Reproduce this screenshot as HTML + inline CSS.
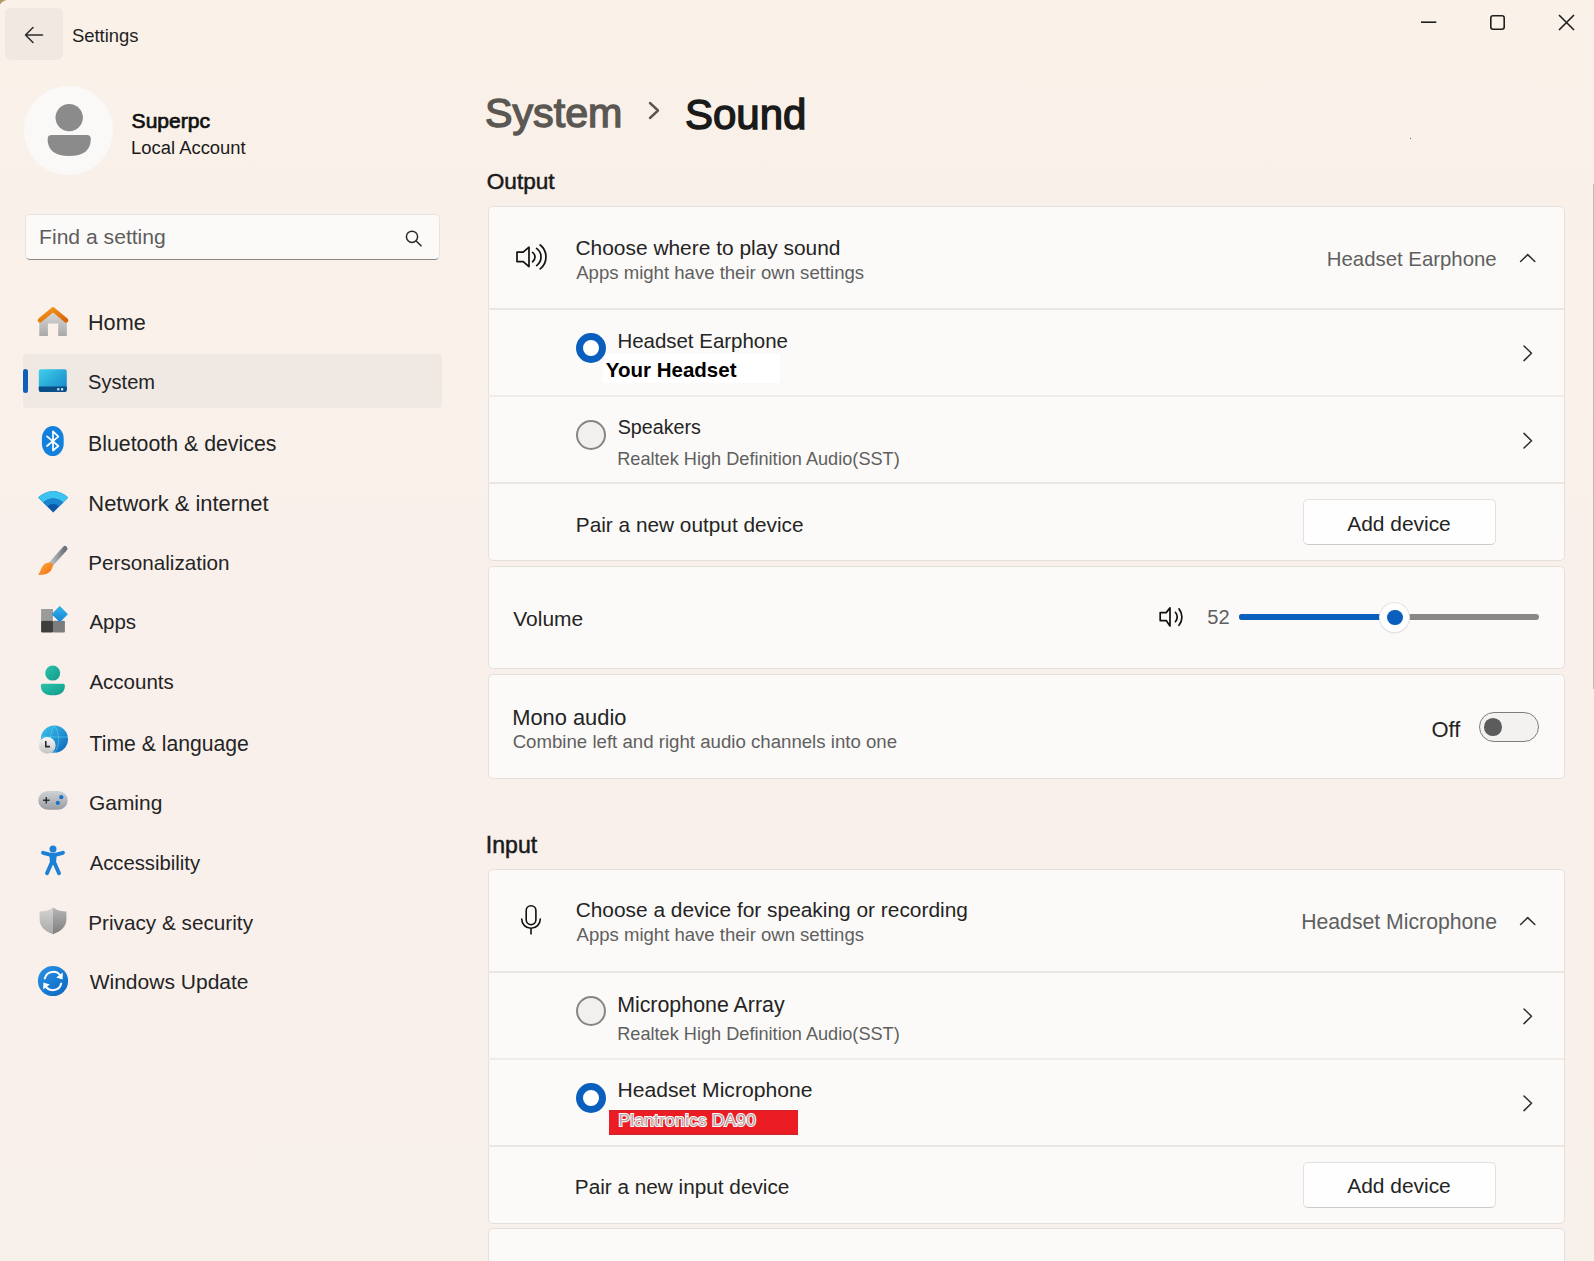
<!DOCTYPE html>
<html><head><meta charset="utf-8">
<style>
html,body{margin:0;padding:0;}
body{width:1594px;height:1261px;overflow:hidden;position:relative;font-family:"Liberation Sans",sans-serif;
background:linear-gradient(180deg,#faf2e9 0%,#f9f1e9 16%,#f9f0eb 45%,#f9f0ec 75%,#f8f0eb 100%);color:#242424;}
.t{position:absolute;white-space:nowrap;line-height:1;}
.b{font-weight:bold;}
.g{color:#5f5f5f;}
.card{position:absolute;left:487.5px;width:1077px;background:#fbfaf8;border:1px solid #e5e0dc;border-radius:4.5px;box-sizing:border-box;}
.div{position:absolute;left:488px;width:1076px;height:2px;background:#ebe6e2;}
.radio{position:absolute;width:30px;height:30px;border-radius:50%;box-sizing:border-box;z-index:2;}
.rsel{border:7px solid #0a5fbe;background:#fff;}
.runsel{border:2px solid #878583;background:#f2f0ee;}
.btn{position:absolute;left:1303px;width:193px;height:46px;background:#fefefe;border:1px solid #e3e0dd;border-bottom-color:#cdcac7;border-radius:5px;box-sizing:border-box;}
svg{position:absolute;overflow:visible;}
</style></head><body>

<!-- title bar -->
<svg style="left:0;top:0" width="10" height="10"><path d="M0,0 H7 Q2.5,0.8 0,4.5 Z" fill="#b3986c"/></svg>
<div style="position:absolute;left:5px;top:8px;width:58px;height:52px;border-radius:6px;background:#f0e8e1;"></div>
<svg style="left:0;top:0" width="1594" height="70">
  <path d="M25.5 35 H42.5 M25.5 35 L33 27.5 M25.5 35 L33 42.5" stroke="#2b2b2b" stroke-width="1.5" fill="none" stroke-linecap="round"/>
  <path d="M1421 22.2 H1436.3" stroke="#1f1f1f" stroke-width="1.6"/>
  <rect x="1490.8" y="15.8" width="13.4" height="13.4" rx="2.2" stroke="#1f1f1f" stroke-width="1.6" fill="none"/>
  <path d="M1559 15 L1574 30 M1574 15 L1559 30" stroke="#1f1f1f" stroke-width="1.6"/>
</svg>
<div id="t1" class="t" style="left:71.92px;top:26.88px;font-size:18.45px;color:#1f1f1f">Settings</div>

<!-- profile -->
<div style="position:absolute;left:24px;top:86px;width:89px;height:89px;border-radius:50%;background:#faf9f8;"></div>
<svg style="left:0;top:0" width="120" height="180">
  <circle cx="69.2" cy="117.6" r="13.7" fill="#8b8b8b"/>
  <path d="M47.6 139 Q47.6 135 51.6 135 H86.8 Q90.8 135 90.8 139 Q90.8 156 69.2 156 Q47.6 156 47.6 139 Z" fill="#8b8b8b"/>
</svg>
<div id="t2" class="t" style="left:131.62px;top:109.90px;font-size:21.05px;color:#111;-webkit-text-stroke:0.7px #111">Superpc</div>
<div id="t3" class="t" style="left:131.09px;top:138.50px;font-size:18.41px;color:#1a1a1a">Local Account</div>

<!-- search -->
<div style="position:absolute;left:24.5px;top:213.5px;width:415.5px;height:46px;border-radius:5px;background:#fbfaf8;border:1px solid #e8e4e0;border-bottom:1.6px solid #8a8682;box-sizing:border-box;"></div>
<div id="t4" class="t" style="left:39.06px;top:226.27px;font-size:21.11px;color:#5d5d5d">Find a setting</div>
<svg style="left:0;top:0" width="450" height="260">
  <circle cx="412" cy="236.8" r="5.6" stroke="#2b2b2b" stroke-width="1.5" fill="none"/>
  <path d="M416.2 241 L421 245.8" stroke="#2b2b2b" stroke-width="1.6" stroke-linecap="round"/>
</svg>

<!-- nav selected -->
<div style="position:absolute;left:23px;top:353.5px;width:419px;height:54.3px;border-radius:4px;background:#efe8e3;"></div>
<div style="position:absolute;left:22.6px;top:369px;width:5px;height:23.5px;border-radius:3px;background:#0f5fb8;"></div>

<div id="nav"></div>
<div id="t5" class="t" style="left:88.02px;top:312.04px;font-size:21.62px">Home</div>
<div id="t6" class="t" style="left:88.11px;top:372.10px;font-size:20.07px">System</div>
<div id="t7" class="t" style="left:88.05px;top:434.06px;font-size:21.32px">Bluetooth &amp; devices</div>
<div id="t8" class="t" style="left:88.34px;top:493.26px;font-size:21.92px">Network &amp; internet</div>
<div id="t9" class="t" style="left:88.30px;top:553.10px;font-size:20.66px">Personalization</div>
<div id="t10" class="t" style="left:89.38px;top:612.10px;font-size:20.50px">Apps</div>
<div id="t11" class="t" style="left:89.38px;top:672.10px;font-size:20.54px">Accounts</div>
<div id="t12" class="t" style="left:89.58px;top:733.02px;font-size:21.18px">Time &amp; language</div>
<div id="t13" class="t" style="left:88.97px;top:793.03px;font-size:20.94px">Gaming</div>
<div id="t14" class="t" style="left:89.63px;top:853.10px;font-size:20.30px">Accessibility</div>
<div id="t15" class="t" style="left:88.24px;top:913.09px;font-size:20.74px">Privacy &amp; security</div>
<div id="t16" class="t" style="left:89.68px;top:971.20px;font-size:21.03px">Windows Update</div>

<svg style="left:0;top:0" width="80" height="1000">
<defs>
  <linearGradient id="gHomeWall" x1="0" y1="0" x2="0" y2="1"><stop offset="0" stop-color="#dcdcdc"/><stop offset="1" stop-color="#a9a9a9"/></linearGradient>
  <linearGradient id="gRoof" x1="0" y1="0" x2="1" y2="1"><stop offset="0" stop-color="#f49a1a"/><stop offset="1" stop-color="#d9640a"/></linearGradient>
  <linearGradient id="gSys" x1="0" y1="0" x2="1" y2="1"><stop offset="0" stop-color="#3fd0ec"/><stop offset="1" stop-color="#1583c6"/></linearGradient>
  <linearGradient id="gHandle" x1="0" y1="0" x2="1" y2="0"><stop offset="0" stop-color="#b9bec3"/><stop offset="1" stop-color="#6c7278"/></linearGradient>
  <linearGradient id="gTip" x1="0" y1="0" x2="1" y2="1"><stop offset="0" stop-color="#fbb03b"/><stop offset="1" stop-color="#f26a10"/></linearGradient>
  <linearGradient id="gDia" x1="0" y1="0" x2="0" y2="1"><stop offset="0" stop-color="#32b6ee"/><stop offset="1" stop-color="#1582d2"/></linearGradient>
  <linearGradient id="gAcc" x1="0" y1="0" x2="1" y2="1"><stop offset="0" stop-color="#2bc4a8"/><stop offset="1" stop-color="#12988e"/></linearGradient>
  <linearGradient id="gGlobe" x1="0" y1="0" x2="1" y2="1"><stop offset="0" stop-color="#3cc6ee"/><stop offset="1" stop-color="#0d62b8"/></linearGradient>
  <linearGradient id="gClock" x1="0" y1="0" x2="0" y2="1"><stop offset="0" stop-color="#f7f7f7"/><stop offset="1" stop-color="#c4c4c4"/></linearGradient>
  <linearGradient id="gPad" x1="0" y1="0" x2="0" y2="1"><stop offset="0" stop-color="#cfd2d5"/><stop offset="1" stop-color="#9a9ea3"/></linearGradient>
  <linearGradient id="gShieldL" x1="0" y1="0" x2="0" y2="1"><stop offset="0" stop-color="#d4d4d4"/><stop offset="1" stop-color="#a8a8a8"/></linearGradient>
  <linearGradient id="gShieldR" x1="0" y1="0" x2="0" y2="1"><stop offset="0" stop-color="#b5b5b5"/><stop offset="1" stop-color="#7e7e7e"/></linearGradient>
  <linearGradient id="gUpd" x1="0" y1="0" x2="1" y2="1"><stop offset="0" stop-color="#2a93e6"/><stop offset="1" stop-color="#0b66c0"/></linearGradient>
</defs>
<!-- Home -->
<path d="M39.3,320 L53,310 L66.8,320 V336 H58.2 V323.4 H47.9 V336 H39.3 Z" fill="url(#gHomeWall)"/>
<path d="M40,320.3 L53,309.5 L66,320.3" stroke="url(#gRoof)" stroke-width="4.6" fill="none" stroke-linecap="round" stroke-linejoin="round"/>
<!-- System -->
<rect x="38.8" y="369.2" width="28" height="22.8" rx="2.2" fill="url(#gSys)"/>
<path d="M38.8,386.5 H66.8 V389.8 Q66.8,392 64.6,392 H41 Q38.8,392 38.8,389.8 Z" fill="#0b4d86"/>
<rect x="57.2" y="388.2" width="2.2" height="2.2" fill="#cfe9f7"/>
<rect x="61" y="388.2" width="2.2" height="2.2" fill="#cfe9f7"/>
<!-- Bluetooth -->
<rect x="41.9" y="426" width="21.8" height="30.1" rx="10.9" ry="12.5" fill="#1280dc"/>
<path d="M47,436.4 L58.4,446 L53,450.5 V431.4 L58.4,436.6 L47,446" stroke="#fff" stroke-width="1.7" fill="none" stroke-linejoin="round" stroke-linecap="round"/>
<!-- Wifi -->
<clipPath id="cw"><path d="M53.2,512.5 L38.2,497.6 Q53.2,484.5 68.2,497.6 Z"/></clipPath>
<g clip-path="url(#cw)">
  <rect x="36" y="484" width="34" height="30" fill="#0c57a6"/>
  <circle cx="53.2" cy="512" r="16.5" fill="#1b8ad6" opacity="0" />
  <path d="M30,484 H76 V514 H30Z M53.2,512.5 m-14,0 a14,14 0 1,0 28,0 a14,14 0 1,0 -28,0" fill="#3cc3f0" fill-rule="evenodd"/>
  <path d="M53.2,512.5 m-14,0 a14,14 0 1,0 28,0 a14,14 0 1,0 -28,0 Z M53.2,512.5 m-8.5,0 a8.5,8.5 0 1,0 17,0 a8.5,8.5 0 1,0 -17,0 Z" fill="#1a86d2" fill-rule="evenodd"/>
</g>
<!-- Personalization -->
<path d="M65,548.5 L51.5,563.5" stroke="url(#gHandle)" stroke-width="5" stroke-linecap="round"/>
<path d="M52.8,563.4 C53.5,567.5 50.5,573.5 44,574.6 C41,575 38.5,575 38,574.8 C40.5,572.5 40.5,568.5 43,565.5 C45.5,562.5 50,561.5 52.8,563.4 Z" fill="url(#gTip)"/>
<!-- Apps -->
<rect x="41.1" y="609" width="11.9" height="11.8" fill="#9b9b9b"/>
<rect x="41.1" y="620.7" width="11.9" height="11.8" rx="1" fill="#3e3e3e"/>
<rect x="53" y="620.7" width="11.9" height="11.8" rx="1" fill="#7d7d7d"/>
<path d="M59.8,606.6 L67.4,614.2 L59.8,621.8 L52.2,614.2 Z" fill="url(#gDia)" stroke="#1a9be0" stroke-width="1" stroke-linejoin="round"/>
<!-- Accounts -->
<circle cx="52.7" cy="673.1" r="7.5" fill="url(#gAcc)"/>
<path d="M40.8,685.5 Q40.8,683.8 42.5,683.8 H63.1 Q64.9,683.8 64.9,685.5 Q64.9,695.3 52.8,695.3 Q40.8,695.3 40.8,685.5 Z" fill="url(#gAcc)"/>
<!-- Time -->
<circle cx="54.4" cy="739.2" r="13.6" fill="url(#gGlobe)"/>
<path d="M41,737 H68 M54.4,725.6 C49,733 49,746 54.4,752.8 M54.4,725.6 C60,733 60,746 54.4,752.8" stroke="#5fd2f5" stroke-width="0.8" fill="none" opacity="0.7"/>
<circle cx="47.2" cy="745.4" r="8.4" fill="url(#gClock)"/>
<path d="M45.8,741 V746.6 H50" stroke="#2a2a2a" stroke-width="1.6" fill="none"/>
<!-- Gaming -->
<rect x="38.3" y="791.1" width="29.4" height="18.7" rx="9.35" fill="url(#gPad)"/>
<path d="M43,800.3 H49.6 M46.3,797 V803.6" stroke="#2e2e2e" stroke-width="1.4"/>
<circle cx="61.3" cy="797.2" r="2.1" fill="#1a73c8"/>
<circle cx="57.8" cy="802.9" r="2.1" fill="#1a73c8"/>
<!-- Accessibility -->
<circle cx="53" cy="849" r="3.5" fill="#1b80d6"/>
<path d="M43,852.8 L50,854.6 H56 L63,852.8" stroke="#1b80d6" stroke-width="3.8" fill="none" stroke-linecap="round" stroke-linejoin="round"/>
<path d="M49.2,854 H56.8 L55.8,865 H50.2 Z" fill="#1b80d6"/>
<path d="M51.5,863 L47,873.2 M54.5,863 L59,873.2" stroke="#1b80d6" stroke-width="3.9" fill="none" stroke-linecap="round"/>
<!-- Privacy -->
<path d="M53,907.6 C48.5,910.8 44,911.5 39.6,911.5 V919.5 C39.6,926.5 45,931.5 53,934.2 Z" fill="url(#gShieldL)"/>
<path d="M53,907.6 C57.5,910.8 62,911.5 66.4,911.5 V919.5 C66.4,926.5 61,931.5 53,934.2 Z" fill="url(#gShieldR)"/>
<!-- Windows update -->
<circle cx="53" cy="981" r="15.1" fill="url(#gUpd)"/>
<path d="M44.8,978.5 A8.6,8.6 0 0 1 60.8,976.5 M61.2,983.5 A8.6,8.6 0 0 1 45.2,985.5" stroke="#fff" stroke-width="2" fill="none" stroke-linecap="round"/>
<path d="M62.8,972.4 L62.6,979.4 L56.2,977.6 Z M43.2,989.6 L43.4,982.6 L49.8,984.4 Z" fill="#fff"/>
</svg>


<!-- main header -->
<div id="t17" class="t" style="left:484.96px;top:92.72px;font-size:41.24px;color:#5b5753;-webkit-text-stroke:1.4px #5b5753">System</div>
<svg style="left:0;top:0" width="700" height="130">
  <path d="M650 103 L658 110.5 L650 118" stroke="#5b5753" stroke-width="2.4" fill="none" stroke-linecap="round" stroke-linejoin="round"/>
</svg>
<div id="t18" class="t" style="left:684.88px;top:94.14px;font-size:42.04px;color:#1a1a1a;-webkit-text-stroke:1.4px #1a1a1a">Sound</div>
<div id="t19" class="t" style="left:486.78px;top:171.38px;font-size:22.60px;color:#1a1a1a;-webkit-text-stroke:0.5px #1a1a1a">Output</div>

<!-- card 1 -->
<div class="card" style="top:205.5px;height:355px;"></div>
<div class="div" style="top:308px"></div>
<div class="div" style="top:395px;background:#f0ece9"></div>
<div class="div" style="top:482px"></div>

<div id="t20" class="t" style="left:575.52px;top:237.56px;font-size:20.91px">Choose where to play sound</div>
<div id="t21" class="t g" style="left:576.22px;top:264.30px;font-size:18.57px">Apps might have their own settings</div>
<div id="t22" class="t g" style="left:1326.84px;top:249.18px;font-size:20.38px">Headset Earphone</div>

<div class="radio rsel" style="left:576px;top:333px"></div>
<div id="t23" class="t" style="left:617.38px;top:331.42px;font-size:20.47px">Headset Earphone</div>
<div style="position:absolute;left:603px;top:353.5px;width:177px;height:29.5px;background:#fff"></div>
<div id="t24" class="t b" style="left:605.85px;top:360.04px;font-size:20.50px;color:#000">Your Headset</div>

<div class="radio runsel" style="left:576px;top:420px"></div>
<div id="t25" class="t" style="left:617.73px;top:418.08px;font-size:19.69px">Speakers</div>
<div id="t26" class="t g" style="left:617.20px;top:449.60px;font-size:18.17px">Realtek High Definition Audio(SST)</div>

<div id="t27" class="t" style="left:575.82px;top:514.59px;font-size:20.80px">Pair a new output device</div>
<div class="btn" style="top:498.5px"></div>
<div id="t28" class="t" style="left:1347.22px;top:513.70px;font-size:20.93px">Add device</div>

<!-- card 2 volume -->
<div class="card" style="top:565.5px;height:103.2px;"></div>
<div id="t29" class="t" style="left:513.31px;top:608.60px;font-size:20.95px">Volume</div>
<div id="t30" class="t g" style="left:1207.29px;top:607.20px;font-size:20.14px">52</div>
<div style="position:absolute;left:1239px;top:614px;width:299.5px;height:6px;border-radius:3px;background:#8a8886"></div>
<div style="position:absolute;left:1239px;top:614px;width:156px;height:6px;border-radius:3px;background:#0a5fbe"></div>
<div style="position:absolute;left:1380px;top:602.5px;width:29px;height:29px;border-radius:50%;background:#fff;box-shadow:0 0 0 1px #e6e3e0, 0 1px 2px rgba(0,0,0,.12)"></div>
<div style="position:absolute;left:1387px;top:609.5px;width:15.5px;height:15.5px;border-radius:50%;background:#0a5fbe"></div>

<!-- card 3 mono -->
<div class="card" style="top:674.1px;height:105.3px;"></div>
<div id="t31" class="t" style="left:512.18px;top:707.23px;font-size:21.86px">Mono audio</div>
<div id="t32" class="t g" style="left:512.64px;top:733.30px;font-size:18.65px">Combine left and right audio channels into one</div>
<div id="t33" class="t" style="left:1431.48px;top:718.60px;font-size:21.96px">Off</div>
<div style="position:absolute;left:1479.3px;top:712.4px;width:59.3px;height:29.2px;border-radius:15px;border:1.9px solid #7f7d7b;background:#f4f2f0;box-sizing:border-box"></div>
<div style="position:absolute;left:1484.2px;top:718.1px;width:17.6px;height:17.6px;border-radius:50%;background:#5c5c5c"></div>

<div id="t34" class="t" style="left:485.86px;top:833.83px;font-size:23.07px;color:#1a1a1a;-webkit-text-stroke:0.5px #1a1a1a">Input</div>

<!-- card 4 -->
<div class="card" style="top:868.6px;height:355.1px;"></div>
<div class="div" style="top:971px"></div>
<div class="div" style="top:1058px;background:#f0ece9"></div>
<div class="div" style="top:1145px"></div>

<div id="t35" class="t" style="left:575.65px;top:900.40px;font-size:20.88px">Choose a device for speaking or recording</div>
<div id="t36" class="t g" style="left:576.58px;top:925.79px;font-size:18.54px">Apps might have their own settings</div>
<div id="t37" class="t g" style="left:1301.16px;top:911.00px;font-size:21.22px">Headset Microphone</div>

<div class="radio runsel" style="left:576px;top:996px"></div>
<div id="t38" class="t" style="left:617.13px;top:995.19px;font-size:21.39px">Microphone Array</div>
<div id="t39" class="t g" style="left:617.20px;top:1025.40px;font-size:18.17px">Realtek High Definition Audio(SST)</div>

<div class="radio rsel" style="left:576px;top:1083px"></div>
<div id="t40" class="t" style="left:617.60px;top:1079.26px;font-size:21.11px">Headset Microphone</div>
<div style="position:absolute;left:609px;top:1110px;width:189px;height:25px;background:#ec1c24;box-shadow:inset 0 1px 0 #c9252b, inset 0 -1px 0 #c9252b"></div>
<div id="t41" class="t" style="left:618.5px;top:1112.2px;font-size:17.2px;letter-spacing:0.3px;color:#fff;-webkit-text-stroke:2px #fff">Plantronics DA90</div>
<div class="t" style="left:618.5px;top:1112.2px;font-size:17.2px;letter-spacing:0.3px;color:#b9a3a3">Plantronics DA90</div>

<div id="t42" class="t" style="left:574.82px;top:1177.17px;font-size:20.76px">Pair a new input device</div>
<div class="btn" style="top:1162px"></div>
<div id="t43" class="t" style="left:1347.22px;top:1176.20px;font-size:20.93px">Add device</div>

<!-- card 5 -->
<div class="card" style="top:1228.25px;height:100px;"></div>

<div style="position:absolute;left:1410px;top:138px;width:1px;height:1px;background:#6f6761"></div>
<!-- scrollbar -->
<div style="position:absolute;left:1592.5px;top:184px;width:2px;height:505px;background:#c2bab5"></div>

<svg style="left:0;top:0" width="1594" height="1261">
<!-- speaker header -->
<path d="M517,252.2 H523.2 L529,247.2 V266.6 L523.2,261.6 H517 Z" stroke="#111" stroke-width="1.7" fill="none" stroke-linejoin="round"/>
<path d="M532.6,252.4 A5.8,5.8 0 0 1 532.6,261.8" stroke="#111" stroke-width="1.7" fill="none" stroke-linecap="round"/>
<path d="M536.6,248.4 A10.6,10.6 0 0 1 536.6,265.6" stroke="#111" stroke-width="1.7" fill="none" stroke-linecap="round"/>
<path d="M540.2,245 A15.2,15.2 0 0 1 540.2,268.8" stroke="#111" stroke-width="1.7" fill="none" stroke-linecap="round"/>
<!-- chevron up header 1 -->
<path d="M1520.6,261.5 L1527.7,254.6 L1534.8,261.5" stroke="#2c2c2c" stroke-width="1.5" fill="none" stroke-linecap="round" stroke-linejoin="round"/>
<!-- chevrons right -->
<path d="M1524,346 L1531.5,353.3 L1524,360.6" stroke="#2c2c2c" stroke-width="1.5" fill="none" stroke-linecap="round" stroke-linejoin="round"/>
<path d="M1524,433.4 L1531.5,440.7 L1524,448" stroke="#2c2c2c" stroke-width="1.5" fill="none" stroke-linecap="round" stroke-linejoin="round"/>
<!-- volume speaker -->
<path d="M1160.2,612.6 H1166.2 L1170,607.9 V626 L1166.2,620.6 H1160.2 Z" stroke="#111" stroke-width="1.7" fill="none" stroke-linejoin="round"/>
<path d="M1175.4,612.3 A7,7 0 0 1 1175.4,621.7" stroke="#111" stroke-width="1.7" fill="none" stroke-linecap="round"/>
<path d="M1179,608.9 A13,13 0 0 1 1179,625.3" stroke="#111" stroke-width="1.7" fill="none" stroke-linecap="round"/>
<!-- mic -->
<rect x="526.2" y="905.7" width="9.7" height="19" rx="4.85" stroke="#111" stroke-width="1.6" fill="none"/>
<path d="M521.7,919 A9.3,9.3 0 0 0 540.3,919" stroke="#111" stroke-width="1.6" fill="none" stroke-linecap="round"/>
<path d="M531,928.5 V934.5" stroke="#111" stroke-width="1.6"/>
<!-- chevron up header 2 -->
<path d="M1520.6,924.5 L1527.7,917.6 L1534.8,924.5" stroke="#2c2c2c" stroke-width="1.5" fill="none" stroke-linecap="round" stroke-linejoin="round"/>
<path d="M1524,1009 L1531.5,1016.3 L1524,1023.6" stroke="#2c2c2c" stroke-width="1.5" fill="none" stroke-linecap="round" stroke-linejoin="round"/>
<path d="M1524,1096 L1531.5,1103.3 L1524,1110.6" stroke="#2c2c2c" stroke-width="1.5" fill="none" stroke-linecap="round" stroke-linejoin="round"/>
</svg>
</body></html>
